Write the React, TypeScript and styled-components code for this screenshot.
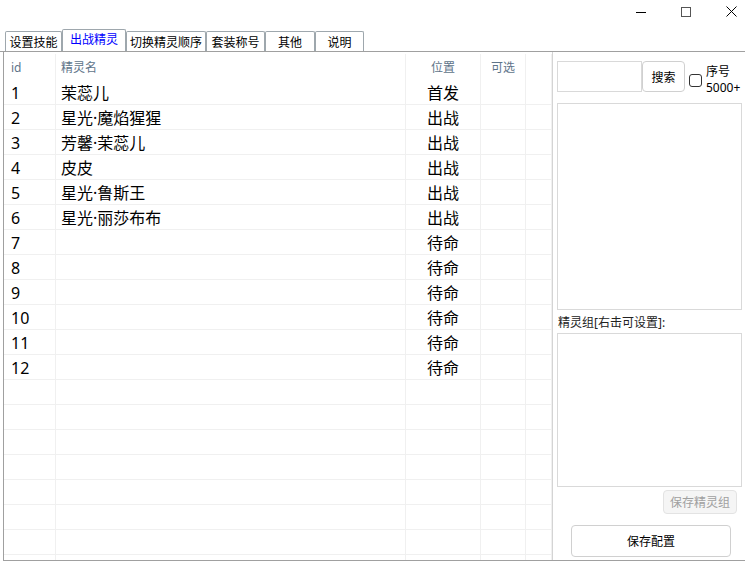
import React from 'react'
import styled, { createGlobalStyle } from 'styled-components'

const GlobalStyle = createGlobalStyle`
    html, body {
        margin: 0;
        padding: 0;
        background: #ffffff;
        overflow: hidden;
    }
    body {
        font-family: "Noto Sans", "Noto Sans CJK SC", sans-serif;
        color: #000;
    }
`

const WindowStyled = styled.div`
    width: 745px;
    height: 562px;
    display: flex;
    flex-direction: column;
    background: #fff;
`

const TitleBar = styled.div`
    height: 29px;
    box-sizing: border-box;
    display: flex;
    justify-content: flex-end;
    align-items: flex-start;
    gap: 34px;
    padding: 6px 8px 0 0;
    flex-shrink: 0;
`

const TabStrip = styled.div`
    height: 23px;
    box-sizing: border-box;
    display: flex;
    align-items: flex-end;
    padding-left: 5px;
    border-bottom: 1px solid #a0a0a0;
    flex-shrink: 0;
`

const Tab = styled.div<{ $w: number; $active?: boolean }>`
    width: ${p => p.$w}px;
    height: ${p => (p.$active ? 22 : 20)}px;
    box-sizing: border-box;
    border: 1px solid #9ea7ad;
    border-bottom: none;
    border-radius: 2px 2px 0 0;
    font-size: 12px;
    line-height: ${p => (p.$active ? 20 : 21)}px;
    text-align: center;
    color: ${p => (p.$active ? '#0000ff' : '#000')};
    background: #fff;
    white-space: nowrap;
    overflow: hidden;
`

const Panel = styled.div`
    flex: 1;
    display: flex;
    margin: 0 0 1px 3px;
    border-left: 1px solid #a0a0a0;
    border-bottom: 1px solid #a0a0a0;
    min-height: 0;
`

const Grid = styled.div`
    width: 549px;
    box-sizing: border-box;
    border-right: 1px solid #d4d4d4;
    overflow: hidden;
    flex-shrink: 0;
`

const HeaderRow = styled.div`
    height: 28px;
    box-sizing: border-box;
    padding-top: 2px;
    display: flex;
`

const HeaderCell = styled.div<{ $w: number; $center?: boolean; $pad?: number }>`
    width: ${p => p.$w}px;
    box-sizing: border-box;
    border-right: 1px solid #f0f0f0;
    font-size: 12px;
    line-height: 27px;
    color: #5e7489;
    text-align: ${p => (p.$center ? 'center' : 'left')};
    padding-left: ${p => (p.$center ? 0 : p.$pad ?? 0)}px;
`

const Row = styled.div`
    height: 25px;
    box-sizing: border-box;
    display: flex;
    border-bottom: 1px solid #f0f0f0;
`

const Cell = styled.div<{ $w: number; $center?: boolean; $pad?: number }>`
    width: ${p => p.$w}px;
    box-sizing: border-box;
    border-right: 1px solid #f0f0f0;
    font-size: 16px;
    line-height: 26px;
    white-space: nowrap;
    text-align: ${p => (p.$center ? 'center' : 'left')};
    padding-left: ${p => (p.$center ? 0 : p.$pad ?? 0)}px;
`

const Side = styled.div`
    flex: 1;
    display: flex;
    flex-direction: column;
    padding: 9px 4px 0 4px;
    box-sizing: border-box;
    font-size: 12px;
`

const SearchRow = styled.div`
    display: flex;
    align-items: flex-start;
    height: 31px;
`

const SearchInput = styled.div`
    width: 85px;
    height: 31px;
    box-sizing: border-box;
    border: 1px solid #d9d9d9;
`

const Button = styled.div<{ $disabled?: boolean }>`
    box-sizing: border-box;
    border: 1px solid ${p => (p.$disabled ? '#e3e3e3' : '#d0d0d0')};
    border-radius: 4px;
    background: ${p => (p.$disabled ? '#f5f5f5' : '#fff')};
    color: ${p => (p.$disabled ? '#a0a0a0' : '#000')};
    display: flex;
    align-items: center;
    justify-content: center;
    font-size: 12px;
    white-space: nowrap;
`

const SearchButton = styled(Button)`
    width: 43px;
    height: 31px;
`

const Check = styled.div`
    width: 13px;
    height: 13px;
    box-sizing: border-box;
    border: 1px solid #333;
    border-radius: 3px;
    margin: 13px 0 0 4px;
`

const CheckLabel = styled.div`
    margin-left: 4px;
    padding-top: 3px;
    font-size: 12px;
    line-height: 16px;
`

const ListBox = styled.div<{ $h: number; $mt: number }>`
    width: 185px;
    height: ${p => p.$h}px;
    margin-top: ${p => p.$mt}px;
    box-sizing: border-box;
    border: 1px solid #d9d9d9;
    flex-shrink: 0;
`

const GroupLabel = styled.div`
    margin-top: 4px;
    padding-left: 1px;
    line-height: 17px;
    color: #222;
`

const SaveGroupButton = styled(Button)`
    width: 74px;
    height: 24px;
    margin: 3px 5px 0 0;
    align-self: flex-end;
`

const SaveButton = styled(Button)`
    width: 160px;
    height: 32px;
    margin: 11px 0 0 14px;
`

const cols = [52, 350, 75, 45, 26]

const rows: [string, string, string][] = [
    ['1', '茉蕊儿', '首发'],
    ['2', '星光·魔焰猩猩', '出战'],
    ['3', '芳馨·茉蕊儿', '出战'],
    ['4', '皮皮', '出战'],
    ['5', '星光·鲁斯王', '出战'],
    ['6', '星光·丽莎布布', '出战'],
    ['7', '', '待命'],
    ['8', '', '待命'],
    ['9', '', '待命'],
    ['10', '', '待命'],
    ['11', '', '待命'],
    ['12', '', '待命'],
]

const tabs: [string, number][] = [
    ['设置技能', 57],
    ['出战精灵', 64],
    ['切换精灵顺序', 80],
    ['套装称号', 59],
    ['其他', 50],
    ['说明', 49],
]

const WindowControls = () => (
    <>
        <svg width="11" height="11" viewBox="0 0 11 11">
            <line x1="0" y1="6.5" x2="10" y2="6.5" stroke="#000" strokeWidth="1" />
        </svg>
        <svg width="11" height="11" viewBox="0 0 11 11">
            <rect x="0.5" y="1.5" width="9" height="9" fill="none" stroke="#555" strokeWidth="1" />
        </svg>
        <svg width="11" height="11" viewBox="0 0 11 11">
            <path d="M0.5 0.5 L10.5 10.5 M10.5 0.5 L0.5 10.5" stroke="#000" strokeWidth="1" />
        </svg>
    </>
)

const App: React.FC = () => {
    const empty = Array.from({ length: 8 }, () => ['', '', ''] as [string, string, string])
    const allRows = [...rows, ...empty]

    return (
        <WindowStyled>
            <GlobalStyle />
            <TitleBar>
                <WindowControls />
            </TitleBar>
            <TabStrip>
                {tabs.map(([label, w]) => (
                    <Tab key={label} $w={w} $active={label === '出战精灵'}>{label}</Tab>
                ))}
            </TabStrip>
            <Panel>
                <Grid>
                    <HeaderRow>
                        <HeaderCell $w={cols[0]} $pad={7}>id</HeaderCell>
                        <HeaderCell $w={cols[1]} $pad={5}>精灵名</HeaderCell>
                        <HeaderCell $w={cols[2]} $center>位置</HeaderCell>
                        <HeaderCell $w={cols[3]} $center>可选</HeaderCell>
                        <HeaderCell $w={cols[4]} />
                    </HeaderRow>
                    {allRows.map(([id, name, pos], i) => (
                        <Row key={i}>
                            <Cell $w={cols[0]} $pad={7}>{id}</Cell>
                            <Cell $w={cols[1]} $pad={5}>{name}</Cell>
                            <Cell $w={cols[2]} $center>{pos}</Cell>
                            <Cell $w={cols[3]} />
                            <Cell $w={cols[4]} />
                        </Row>
                    ))}
                </Grid>
                <Side>
                    <SearchRow>
                        <SearchInput />
                        <SearchButton>搜索</SearchButton>
                        <Check />
                        <CheckLabel>
                            序号<br />5000+
                        </CheckLabel>
                    </SearchRow>
                    <ListBox $h={207} $mt={11} />
                    <GroupLabel>精灵组[右击可设置]:</GroupLabel>
                    <ListBox $h={154} $mt={2} />
                    <SaveGroupButton $disabled>保存精灵组</SaveGroupButton>
                    <SaveButton>保存配置</SaveButton>
                </Side>
            </Panel>
        </WindowStyled>
    )
}

export default App
